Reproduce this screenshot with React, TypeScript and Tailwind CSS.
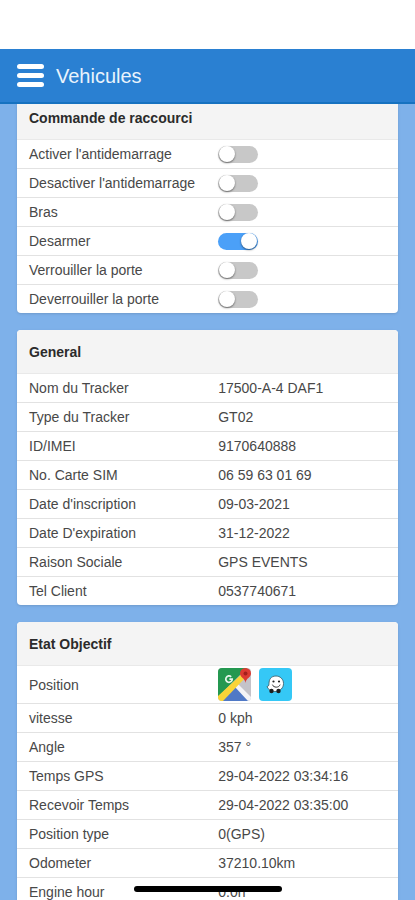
import { useState, type ReactNode } from 'react';

const COMMANDS = [
  { id: 'immobilizer-on', label: "Activer l'antidemarrage", on: false },
  { id: 'immobilizer-off', label: "Desactiver l'antidemarrage", on: false },
  { id: 'arm', label: 'Bras', on: false },
  { id: 'disarm', label: 'Desarmer', on: true },
  { id: 'lock', label: 'Verrouiller la porte', on: false },
  { id: 'unlock', label: 'Deverrouiller la porte', on: false },
];

const GENERAL = [
  ['Nom du Tracker', '17500-A-4 DAF1'],
  ['Type du Tracker', 'GT02'],
  ['ID/IMEI', '9170640888'],
  ['No. Carte SIM', '06 59 63 01 69'],
  ["Date d'inscription", '09-03-2021'],
  ["Date D'expiration", '31-12-2022'],
  ['Raison Sociale', 'GPS EVENTS'],
  ['Tel Client', '0537740671'],
];

const STATUS = [
  ['vitesse', '0 kph'],
  ['Angle', '357 °'],
  ['Temps GPS', '29-04-2022 03:34:16'],
  ['Recevoir Temps', '29-04-2022 03:35:00'],
  ['Position type', '0(GPS)'],
  ['Odometer', '37210.10km'],
  ['Engine hour', '0.0h'],
];

export default function App() {
  const [commands, setCommands] = useState(COMMANDS);

  function toggle(id: string) {
    setCommands((list) => list.map((c) => (c.id === id ? { ...c, on: !c.on } : c)));
  }

  return (
    <div className="relative flex h-screen flex-col bg-[#7eb1ea] font-['Liberation_Sans',Arial,sans-serif] text-sm text-[#484848]">
      {/* Status bar area + title bar */}
      <header className="shrink-0 bg-white pt-[49px]">
        <div className="flex h-[55px] items-center gap-3 border-b-2 border-[#1672c0] bg-[#2a80d2] px-[17px]">
          <button type="button" aria-label="Menu" className="flex w-[27px] flex-col gap-1">
            <span className="h-[5px] rounded-full bg-white" />
            <span className="h-[5px] rounded-full bg-white" />
            <span className="h-[5px] rounded-full bg-white" />
          </button>
          <h1 className="text-xl text-[#e9f3fc]">Vehicules</h1>
        </div>
      </header>

      <main className="min-h-0 flex-1 overflow-y-auto px-[17px] [scrollbar-width:none]">
        <div className="-mt-2 flex flex-col gap-[17px]">
          <Card title="Commande de raccourci">
            {commands.map((c) => (
              <Row key={c.id} label={<label htmlFor={c.id}>{c.label}</label>}>
                <Toggle id={c.id} checked={c.on} onChange={() => toggle(c.id)} />
              </Row>
            ))}
          </Card>

          <Card title="General">
            {GENERAL.map(([label, value]) => (
              <Row key={label} label={label}>
                {value}
              </Row>
            ))}
          </Card>

          <Card title="Etat Objectif">
            <Row label="Position">
              <div className="flex gap-2 py-[2px]">
                <a href="#maps" aria-label="Google Maps">
                  <MapsIcon />
                </a>
                <a href="#waze" aria-label="Waze">
                  <WazeIcon />
                </a>
              </div>
            </Row>
            {STATUS.map(([label, value]) => (
              <Row key={label} label={label}>
                {value}
              </Row>
            ))}
          </Card>
        </div>
      </main>

      {/* Home indicator */}
      <div className="absolute bottom-2 left-1/2 h-[6px] w-[148px] -translate-x-1/2 rounded-full bg-black" />
    </div>
  );
}

function Card({ title, children }: { title: string; children: ReactNode }) {
  return (
    <section className="overflow-hidden rounded bg-white shadow-sm">
      <h2 className="flex h-11 items-center border-b border-[#e9e9e9] bg-[#f4f4f4] px-3 font-bold text-[#2b2b2b]">
        {title}
      </h2>
      <div className="divide-y divide-[#e2e2e2]">{children}</div>
    </section>
  );
}

function Row({ label, children }: { label: ReactNode; children: ReactNode }) {
  return (
    <div className="flex min-h-[29px] items-center px-3 last:min-h-7">
      <div className="w-[53%] shrink-0">{label}</div>
      <div className="min-w-0 flex-1">{children}</div>
    </div>
  );
}

function Toggle({ id, checked, onChange }: { id: string; checked: boolean; onChange: () => void }) {
  return (
    <input
      id={id}
      type="checkbox"
      role="switch"
      checked={checked}
      onChange={onChange}
      className="flex h-[17px] w-10 cursor-pointer appearance-none items-center rounded-full bg-[#c8c8c8] px-px before:size-4 before:rounded-full before:bg-white before:shadow-[0_1px_2px_rgba(0,0,0,0.5)] before:content-[''] checked:justify-end checked:bg-[#4ba0f8]"
    />
  );
}

function MapsIcon() {
  return (
    <svg viewBox="0 0 33 33" className="size-[33px]">
      <defs>
        <clipPath id="maps-tile">
          <rect width="33" height="33" rx="4" />
        </clipPath>
      </defs>
      <g clipPath="url(#maps-tile)">
        <rect width="33" height="33" fill="#c4c3c9" />
        <path d="M0 0H29L0 29Z" fill="#249850" />
        <path d="M4 33 17 18 31 33Z" fill="#5079c6" />
        <path d="M16 18 19 15 33 29V33H30Z" fill="#f4f4f6" />
        <path d="M0 28 25 5 28 9 5 33H0Z" fill="#f9d437" />
      </g>
      <path
        d="M13.2 8.8A3.2 3.2 0 1 0 14.2 11.2H11.4"
        fill="none"
        stroke="#e8f5ec"
        strokeWidth="1.7"
      />
      <path d="M27.5 0A5.5 5.5 0 0 0 22 5.5C22 9.5 27 10 27.5 15C28 10 33 9.5 33 5.5A5.5 5.5 0 0 0 27.5 0Z" fill="#dc3b31" />
      <circle cx="27.5" cy="5.5" r="2" fill="#a3201c" />
    </svg>
  );
}

function WazeIcon() {
  return (
    <svg viewBox="0 0 33 33" className="size-[33px]">
      <rect width="33" height="33" rx="4" fill="#35c8f6" />
      <path
        d="M17 8C12 8 10 11.5 10 15.5C10 18 9 18.5 8 18.5C9 21.5 12 23.5 16 23.5C21.500 23.5 24.5 19.5 24.5 15.5C24.5 11 21 8 17 8Z"
        fill="#fff"
        stroke="#3f6472"
        strokeWidth="0.9"
      />
      <circle cx="14.5" cy="13.5" r="1.1" fill="#222" />
      <circle cx="20" cy="13.5" r="1.1" fill="#222" />
      <path d="M13.5 17C14.5 20 20 20 21 17" fill="none" stroke="#333" strokeLinecap="round" />
      <circle cx="12.5" cy="23" r="2.2" fill="#1c1c1c" />
      <circle cx="19.5" cy="23" r="2.2" fill="#1c1c1c" />
    </svg>
  );
}
